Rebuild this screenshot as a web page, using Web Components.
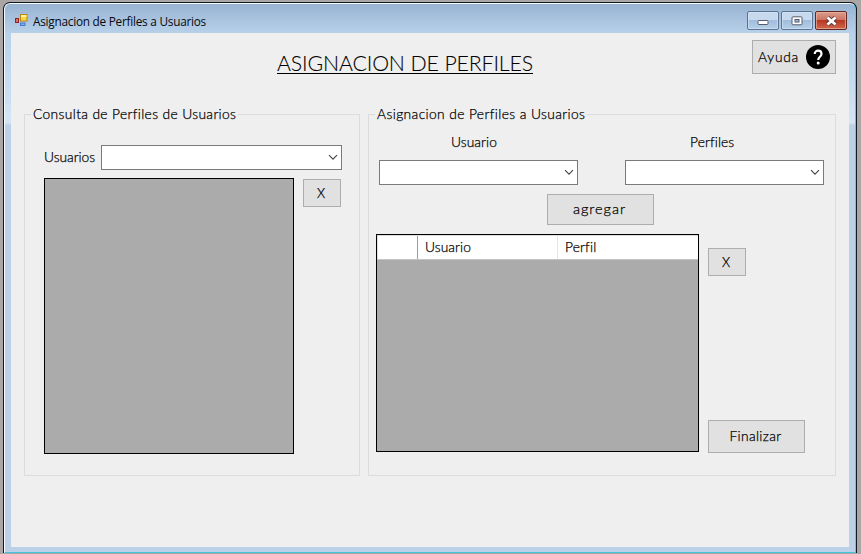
<!DOCTYPE html>
<html lang="es"><head><meta charset="utf-8"><title>Asignacion de Perfiles a Usuarios</title>
<style>
html,body{margin:0;width:861px;height:554px;overflow:hidden;background:#aaa6a6}
body{font:300 13.8px/18px "Century Gothic",Lato,"Open Sans",sans-serif;color:#000;-webkit-text-stroke:.25px #000}
</style></head><body><perfiles-page></perfiles-page>
<script>
class Base extends HTMLElement{
  render(html){ if(!this.shadowRoot) this.attachShadow({mode:'open'}).innerHTML=html; }
}
/* Text label that spreads its letters to occupy the width given in "w". */
customElements.define('fit-text',class extends Base{
  connectedCallback(){
    this.render('<style>:host{display:inline-block;white-space:nowrap;flex:none}span{display:inline-block}</style><span><slot></slot></span>');
    const w=+this.getAttribute('w'),s=this.shadowRoot.querySelector('span'),n=this.textContent.length;
    this.style.width=w+'px';
    s.style.letterSpacing=((w-s.getBoundingClientRect().width)/n)+'px';
  }
});
customElements.define('ui-button',class extends Base{
  connectedCallback(){
    this.render('<style>:host{display:flex;box-sizing:border-box;align-items:center;justify-content:center;border:1px solid #adadad;background:#e1e1e1;flex:none}</style><slot></slot>');
  }
});
customElements.define('ui-combo',class extends Base{
  connectedCallback(){
    this.render('<style>:host{display:flex;box-sizing:border-box;height:25px;border:1px solid #7a7a7a;background:#fff;align-items:center;justify-content:flex-end;padding-right:3px;flex:none}</style><svg width="10" height="7" viewBox="0 0 10 7"><path d="M1 1.2 5 5.2 9 1.2" fill="none" stroke="#444" stroke-width="1.1"/></svg>');
  }
});
customElements.define('ui-group',class extends Base{
  connectedCallback(){
    this.render(`<style>:host{display:block;box-sizing:border-box;border:1px solid #dcdcdc;height:362px;flex:none}
    .legend{display:block;width:max-content;height:20px;line-height:20px;margin:-11px 0 0 6px;padding:0 2px;background:#efefef}</style>
    <div class="legend"><slot name="legend"></slot></div><slot></slot>`);
  }
});
customElements.define('data-grid',class extends Base{
  connectedCallback(){
    this.render('<style>:host{display:block;box-sizing:border-box;border:1px solid #000;background:#ababab;flex:none}</style><slot></slot>');
  }
});
customElements.define('grid-header',class extends Base{
  connectedCallback(){
    this.render(`<style>:host{display:grid;grid-template-columns:40px 140px 1fr;height:25px;box-sizing:border-box;background:#fff;border-top:1px solid #ddd;border-left:1px solid #ddd;border-bottom:1px solid #c4c4c4}
    div{display:flex;align-items:center;padding-left:7px;padding-bottom:1px}.corner{border-right:1px solid #9d9d9d}.first{border-right:1px solid #e5e5e5}</style>
    <div class="corner"></div><div class="first"><slot name="a"></slot></div><div><slot name="b"></slot></div>`);
  }
});
customElements.define('help-icon',class extends Base{
  connectedCallback(){
    this.render('<style>:host{display:block;width:24px;height:24px}svg{display:block}</style><svg width="24" height="24" viewBox="0 0 24 24"><circle cx="12" cy="12" r="12"/><path d="M8.7 9.1C8.7 4.5 15.5 4.7 15.5 9c0 2.7-3.3 3-3.3 6.1" fill="none" stroke="#fff" stroke-width="2.2"/><circle cx="12.2" cy="18.1" r="1.5" fill="#fff"/></svg>');
  }
});
customElements.define('title-bar',class extends Base{
  connectedCallback(){
    this.render(`<style>:host{display:flex;height:29px;font:400 11.8px/18px "Segoe UI","Open Sans","Noto Sans",sans-serif;color:#06090f;-webkit-text-stroke:0}
    .app{margin:10px 5px 0 10px}fit-text{margin-top:8px}.sys{margin:7px 8px 0 auto;display:flex;gap:2px}
    .b{box-sizing:border-box;width:32px;height:19px;border:1px solid #5b7391;border-radius:2px;background:linear-gradient(#c7daed 0 48%,#a2bddb 50%,#b5cfe8);box-shadow:inset 0 0 0 1px #d3e4f4aa;display:grid;place-items:center}
    .x{background:linear-gradient(#dc9d8b,#cc7462 46%,#b73722 50%,#cf6a4b);border-color:#5f2825;box-shadow:inset 0 0 0 1px #eeb5a4aa}svg{display:block}</style>
    <svg class="app" width="13" height="14" viewBox="0 0 13 14"><rect x=".5" y="4.5" width="3" height="4" fill="#d47468" stroke="#8f2222"/><rect x="5.5" y=".5" width="6.5" height="6.5" fill="#f7d844" stroke="#b5851e"/><path d="M6 1h5.5v2H6z" fill="#fff29d"/><rect x="5.5" y="9" width="4.5" height="2.5" fill="#78aef0" stroke="#4a79c9"/></svg>
    <fit-text w="173">Asignacion de Perfiles a Usuarios</fit-text>
    <div class="sys"><div class="b"><svg width="12" height="11"><rect x="1" y="5.5" width="10" height="4" rx="1" fill="#fff" stroke="#535c6c"/></svg></div>
    <div class="b"><svg width="12" height="10"><rect x="1" y=".8" width="10" height="8" rx="1" fill="#fff" stroke="#535c6c"/><rect x="4" y="3.5" width="4" height="2.5" fill="#9fbad5" stroke="#535c6c"/></svg></div>
    <div class="b x"><svg width="13" height="10" viewBox="0 0 13 10"><path d="M2.5 1.5 10.5 8.5M10.5 1.5 2.5 8.5" stroke="#5e3437" stroke-width="4.4"/><path d="M2.5 1.5 10.5 8.5M10.5 1.5 2.5 8.5" stroke="#fff" stroke-width="2.8"/></svg></div></div>`);
  }
});
customElements.define('app-window',class extends Base{
  connectedCallback(){
    this.render(`<style>:host{display:block;box-sizing:border-box;width:854px;height:551px;margin:2px 0 0 3px;border:1px solid #111a22;border-bottom:0;border-radius:7px 7px 0 0;background:#111a22}
    .frame{box-sizing:border-box;height:550px;border:1px solid #f6fbff;border-right-color:#4fd0f2;border-bottom-color:#45c4dc;border-radius:6px 6px 0 0;padding:0 6px 5px 6px;
      background:linear-gradient(#98b4d2,#b9d1ea 30px,#c5dbf0 75px,#d5e5f5 119px,#bcd1e8 121px)}
    title-bar{margin:0 -6px}.client{height:514px;background:#efefef;overflow:hidden}</style>
    <div class="frame"><title-bar></title-bar><div class="client"><slot></slot></div></div>`);
  }
});
customElements.define('perfiles-page',class extends Base{
  connectedCallback(){
    this.render(`<style>:host{display:block}
    .head{display:flex;height:81px;align-items:flex-start}
    h1{margin:18px 0 0 266px;font-weight:300;font-size:21.3px;line-height:24px;height:23px;-webkit-text-stroke:.1px #000}
    h1 fit-text{height:23px;border-bottom:1px solid #000;box-sizing:border-box}
    .help{width:84px;height:34px;margin:7px 13px 0 auto;justify-content:flex-start;padding-left:5px;gap:7px}
    .groups{display:flex;gap:8px;padding-left:13px}
    .g1{width:336px}.g2{width:468px}
    .r1{display:flex;align-items:center;gap:6px;margin:21px 0 0 19px}.r1 fit-text{margin-bottom:2px}
    .r2{display:flex;align-items:flex-start;gap:9px;margin:8px 0 0 19px}
    .x{width:38px;height:28px;font-size:13px;padding:0 2px 1px 0}.r2 .x{margin-top:1px}
    .cols{display:grid;grid-template-columns:199px 199px;gap:0 47px;margin:9px 0 0 10px}
    .cols>fit-text{justify-self:start;height:27px}
    .add{width:107px;height:31px;margin:9px 0 0 178px;padding:0 2px 1px 0;font-size:14.5px}
    .r3{display:flex;gap:9px;margin:9px 0 0 7px}
    .side{display:flex;flex-direction:column;justify-content:space-between;height:219px;padding-top:14px;box-sizing:border-box}
    .fin{width:97px;height:33px;padding:0 2px 1px 0}</style>
    <app-window>
      <div class="head"><h1><fit-text w="256">ASIGNACION DE PERFILES</fit-text></h1><ui-button class="help"><fit-text w="41">Ayuda</fit-text><help-icon></help-icon></ui-button></div>
      <div class="groups">
        <ui-group class="g1"><fit-text slot="legend" w="203">Consulta de Perfiles de Usuarios</fit-text>
          <div class="r1"><fit-text w="51">Usuarios</fit-text><ui-combo style="width:241px"></ui-combo></div>
          <div class="r2"><data-grid style="width:250px;height:276px"></data-grid><ui-button class="x">X</ui-button></div>
        </ui-group>
        <ui-group class="g2"><fit-text slot="legend" w="208">Asignacion de Perfiles a Usuarios</fit-text>
          <div class="cols"><fit-text w="46" style="margin-left:72px">Usuario</fit-text><fit-text w="44" style="margin-left:65px">Perfiles</fit-text><ui-combo></ui-combo><ui-combo></ui-combo></div>
          <ui-button class="add"><fit-text w="53">agregar</fit-text></ui-button>
          <div class="r3"><data-grid style="width:323px;height:218px"><grid-header><fit-text slot="a" w="46">Usuario</fit-text><fit-text slot="b" w="31">Perfil</fit-text></grid-header></data-grid>
            <div class="side"><ui-button class="x">X</ui-button><ui-button class="fin"><fit-text w="52">Finalizar</fit-text></ui-button></div></div>
        </ui-group>
      </div>
    </app-window>`);
  }
});
</script></body></html>
